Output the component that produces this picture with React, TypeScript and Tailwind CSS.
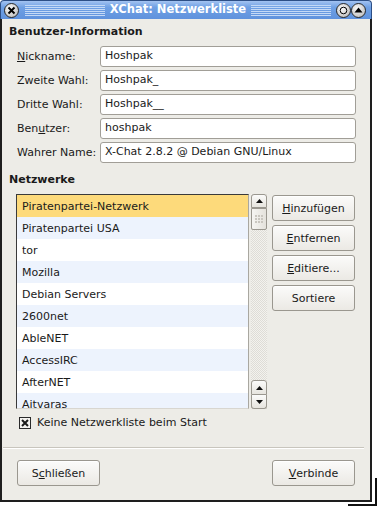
import React from "react";

const networks = [
  "Piratenpartei-Netzwerk",
  "Piratenpartei USA",
  "tor",
  "Mozilla",
  "Debian Servers",
  "2600net",
  "AbleNET",
  "AccessIRC",
  "AfterNET",
  "Aitvaras",
];

const fields = [
  { label: <><span className="underline">N</span>ickname:</>, value: "Hoshpak" },
  { label: <>Zweite Wahl:</>, value: "Hoshpak_" },
  { label: <>Dritte Wahl:</>, value: "Hoshpak__" },
  { label: <>Ben<span className="underline">u</span>tzer:</>, value: "hoshpak" },
  { label: <>Wahrer Name:</>, value: "X-Chat 2.8.2 @ Debian GNU/Linux" },
];

function GtkButton({ children }: { children: React.ReactNode }) {
  return (
    <button className="w-[83px] h-[26px] rounded-[3px] border border-[#9a978f] bg-[linear-gradient(#fbfbfa,#ebe9e4)] text-[11px] leading-none text-[#1a1a1a] flex items-center justify-center shadow-[inset_0_1px_0_#fff]">
      {children}
    </button>
  );
}

function Arrow({ up }: { up: boolean }) {
  return (
    <svg width="7" height="4" viewBox="0 0 7 4">
      {up ? <path d="M0 4 L3.5 0 L7 4 Z" fill="#111" /> : <path d="M0 0 L7 0 L3.5 4 Z" fill="#111" />}
    </svg>
  );
}

function Stepper({ up, className }: { up: boolean; className: string }) {
  return (
    <div className={`w-[16px] border border-[#9a978f] bg-[linear-gradient(#fbfbfa,#e6e4de)] flex items-center justify-center ${className}`}>
      <Arrow up={up} />
    </div>
  );
}

function TitleButton({ kind }: { kind: "close" | "min" | "max" }) {
  return (
    <div className="w-[15px] h-[15px] rounded-full border border-[#2a2a2a] bg-[radial-gradient(circle_at_40%_35%,#fafafa,#c8c8c8_70%,#9a9a9a)] flex items-center justify-center">
      <svg width="9" height="9" viewBox="0 0 9 9">
        {kind === "close" && (
          <path d="M1.5 1.5 L7.5 7.5 M7.5 1.5 L1.5 7.5" stroke="#000" strokeWidth="2" />
        )}
        {kind === "min" && <circle cx="4.5" cy="4.5" r="3.3" fill="none" stroke="#000" strokeWidth="1" />}
        {kind === "max" && <path d="M0.5 6.5 L4.5 1.5 L8.5 6.5 Z" fill="#000" />}
      </svg>
    </div>
  );
}

function Stripes() {
  return (
    <div className="flex-1 h-[11px] bg-[repeating-linear-gradient(to_bottom,#c4d9f6_0px,#c4d9f6_1px,transparent_1px,transparent_2px)]" />
  );
}

export default function App() {
  return (
    <div className="relative w-[378px] h-[508px] bg-white overflow-hidden font-['DejaVu_Sans',sans-serif] text-[#1a1a1a]">
      <div className="w-[372px] h-[502px] flex flex-col">
        {/* Title bar */}
        <div className="h-[19px] rounded-t-[4px] border border-b-0 border-[#2d4f86] bg-[linear-gradient(#a3c3f1,#6fa0e4_35%,#5f92dd)] flex items-center pl-[3px] pr-[5px]">
          <TitleButton kind="close" />
          <div className="flex-1 flex items-center ml-[6px] mr-[5px]">
            <Stripes />
            <span className="px-[5px] text-[11.5px] font-bold text-white leading-none">XChat: Netzwerkliste</span>
            <Stripes />
          </div>
          <TitleButton kind="min" />
          <TitleButton kind="max" />
        </div>

        {/* Content */}
        <div className="flex-1 flex flex-col bg-[#edece7] border-x-2 border-b-2 border-[#1e1e1e]">
          <div className="pl-[7px] pt-[6px] text-[11px] font-bold leading-[14px]">Benutzer-Information</div>

          <div className="mt-[7px] flex flex-col gap-[3px]">
            {fields.map((f, i) => (
              <div key={i} className="flex items-center pl-[15px]">
                <div className="w-[83px] text-[11px] leading-[14px]">{f.label}</div>
                <div className="w-[256px] h-[21px] rounded-[3px] border border-[#a19e97] bg-white pl-[4px] flex items-center text-[11px]">
                  {f.value}
                </div>
              </div>
            ))}
          </div>

          <div className="mt-[10px] pl-[7px] text-[11px] font-bold leading-[14px]">Netzwerke</div>

          <div className="mt-[7px] flex pl-[14px]">
            <div className="w-[233px] h-[215px] border border-[#3a3a3a] border-r-[#a9a7a0] border-b-[#d8d6d0] bg-white overflow-hidden">
              {networks.map((n, i) => (
                <div
                  key={n}
                  className={`h-[22px] pl-[5px] pt-[2px] flex items-center text-[11px] ${
                    i === 0 ? "bg-[#fdda7b]" : i % 2 === 1 ? "bg-[#edf3fd]" : "bg-white"
                  }`}
                >
                  {n}
                </div>
              ))}
            </div>

            <div className="ml-[2px] w-[16px] h-[215px] flex flex-col bg-[repeating-conic-gradient(#dedcd6_0_25%,#f3f2ee_0_50%)] bg-[length:2px_2px]">
              <Stepper up={true} className="h-[14px] rounded-t-[3px]" />
              <div className="h-[22px] w-[16px] border border-[#9a978f] bg-[linear-gradient(90deg,#f6f5f2,#e4e2dc)] flex items-center justify-center rounded-b-[2px]">
                <svg width="8" height="10" viewBox="0 0 8 10">
                  {[0, 3, 6].map((x) =>
                    [1, 4, 7].map((y) => <rect key={`${x}-${y}`} x={x} y={y} width="2" height="2" fill="#c9c6bf" />)
                  )}
                </svg>
              </div>
              <div className="flex-1" />
              <Stepper up={true} className="h-[15px] rounded-t-[3px]" />
              <Stepper up={false} className="h-[14px] rounded-b-[3px] border-t-0" />
            </div>

            <div className="ml-[5px] flex flex-col gap-[4px] pt-[1px]">
              <GtkButton><span className="underline">H</span>inzufügen</GtkButton>
              <GtkButton><span className="underline">E</span>ntfernen</GtkButton>
              <GtkButton><span className="underline">E</span>ditiere...</GtkButton>
              <GtkButton>Sortiere</GtkButton>
            </div>
          </div>

          <div className="mt-[7px] pl-[17px] flex items-center gap-[6px]">
            <div className="w-[12px] h-[12px] border border-[#2a2a2a] bg-[#f4f3f0] flex items-center justify-center">
              <svg width="8" height="8" viewBox="0 0 8 8">
                <path d="M1 1 L7 7 M7 1 L1 7" stroke="#1a1a1a" strokeWidth="2" />
              </svg>
            </div>
            <span className="text-[11px] leading-[14px]">Keine Netzwerkliste beim Start</span>
          </div>

          <div className="mt-[17px] ml-[1px] mr-[6px] h-[2px] border-t border-[#c8c5bd] bg-white" />

          <div className="mt-[11px] flex justify-between px-[15px]">
            <GtkButton>S<span className="underline">c</span>hließen</GtkButton>
            <GtkButton><span className="underline">V</span>erbinde</GtkButton>
          </div>
        </div>
      </div>

      {/* resize corner shadow */}
      <div className="absolute left-[375px] top-[478px] w-[2px] h-[28px] bg-[#111]" />
      <div className="absolute left-[348px] top-[504px] w-[29px] h-[2px] bg-[#111]" />
    </div>
  );
}
